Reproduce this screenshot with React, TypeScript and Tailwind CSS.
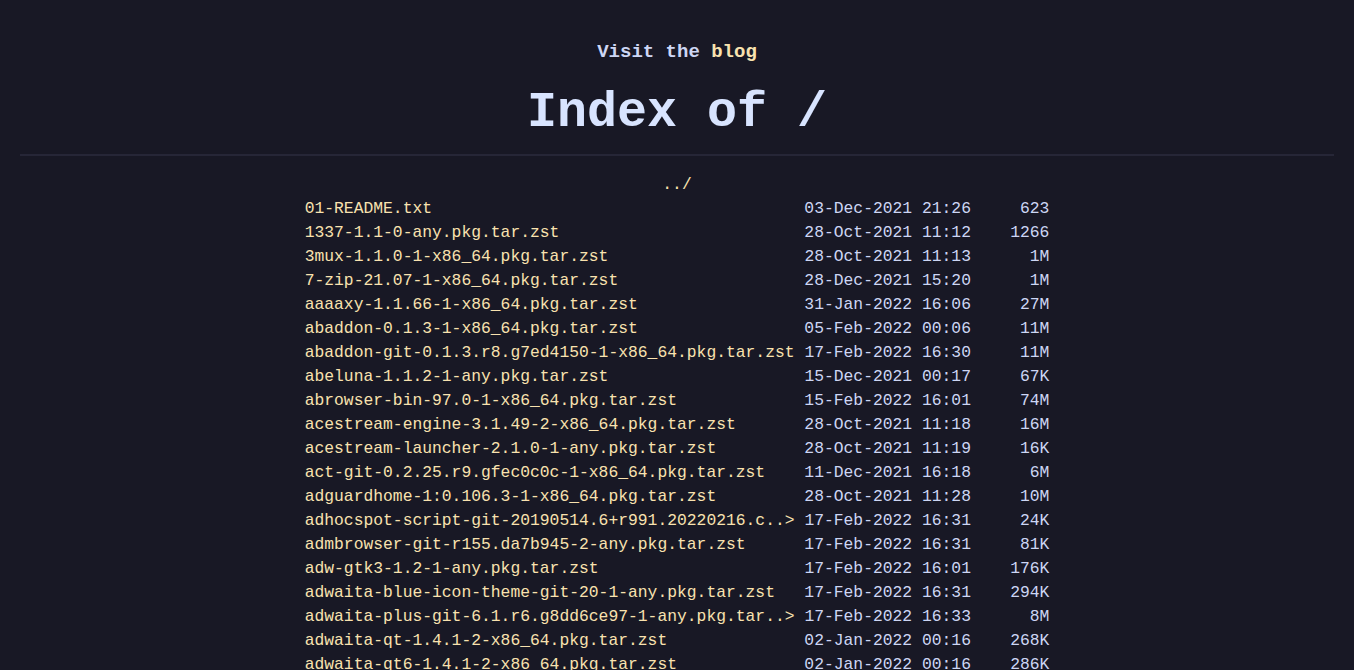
import React from "react";

const rows: [string, string, string][] = [
  ["01-README.txt", "03-Dec-2021 21:26", "623"],
  ["1337-1.1-0-any.pkg.tar.zst", "28-Oct-2021 11:12", "1266"],
  ["3mux-1.1.0-1-x86_64.pkg.tar.zst", "28-Oct-2021 11:13", "1M"],
  ["7-zip-21.07-1-x86_64.pkg.tar.zst", "28-Dec-2021 15:20", "1M"],
  ["aaaaxy-1.1.66-1-x86_64.pkg.tar.zst", "31-Jan-2022 16:06", "27M"],
  ["abaddon-0.1.3-1-x86_64.pkg.tar.zst", "05-Feb-2022 00:06", "11M"],
  ["abaddon-git-0.1.3.r8.g7ed4150-1-x86_64.pkg.tar.zst", "17-Feb-2022 16:30", "11M"],
  ["abeluna-1.1.2-1-any.pkg.tar.zst", "15-Dec-2021 00:17", "67K"],
  ["abrowser-bin-97.0-1-x86_64.pkg.tar.zst", "15-Feb-2022 16:01", "74M"],
  ["acestream-engine-3.1.49-2-x86_64.pkg.tar.zst", "28-Oct-2021 11:18", "16M"],
  ["acestream-launcher-2.1.0-1-any.pkg.tar.zst", "28-Oct-2021 11:19", "16K"],
  ["act-git-0.2.25.r9.gfec0c0c-1-x86_64.pkg.tar.zst", "11-Dec-2021 16:18", "6M"],
  ["adguardhome-1:0.106.3-1-x86_64.pkg.tar.zst", "28-Oct-2021 11:28", "10M"],
  ["adhocspot-script-git-20190514.6+r991.20220216.c..>", "17-Feb-2022 16:31", "24K"],
  ["admbrowser-git-r155.da7b945-2-any.pkg.tar.zst", "17-Feb-2022 16:31", "81K"],
  ["adw-gtk3-1.2-1-any.pkg.tar.zst", "17-Feb-2022 16:01", "176K"],
  ["adwaita-blue-icon-theme-git-20-1-any.pkg.tar.zst", "17-Feb-2022 16:31", "294K"],
  ["adwaita-plus-git-6.1.r6.g8dd6ce97-1-any.pkg.tar..>", "17-Feb-2022 16:33", "8M"],
  ["adwaita-qt-1.4.1-2-x86_64.pkg.tar.zst", "02-Jan-2022 00:16", "268K"],
  ["adwaita-qt6-1.4.1-2-x86_64.pkg.tar.zst", "02-Jan-2022 00:16", "286K"],
  ["adwaita-qt-git-1.4.1.r22.gd73ac03-1-x86_64.pkg.tar.zst", "17-Feb-2022 16:33", "268K"],
  ["aerc-0.7.1-1-x86_64.pkg.tar.zst", "28-Oct-2021 11:31", "4M"],
];

export default function App() {
  return (
    <div
      className="min-h-screen bg-[#181825] text-[#cdd6f4]"
      style={{ fontFamily: '"Liberation Mono", "DejaVu Sans Mono", monospace' }}
    >
      <div className="pt-[40px] text-center">
        <p className="text-[19px] leading-[24px] font-bold text-[#cdd6f4]">
          Visit the <a className="text-[#f9e2af]">blog</a>
        </p>
        <h1 className="mt-[19px] text-[50px] leading-[60px] font-bold text-[#d8e4ff]">Index of /</h1>
      </div>
      <div className="mx-[20px] mt-[11px] h-[2px] bg-[#262637]" />
      <div className="mt-[17px] text-center text-[16.33px] leading-[24px]">
        <a className="text-[#f9e2af]">../</a>
      </div>
      <pre
        className="mx-auto w-fit text-[16.33px] leading-[24px] pb-8"
        style={{ fontFamily: '"Liberation Mono", "DejaVu Sans Mono", monospace' }}
      >
        {rows.map(([name, date, size]) => {
          const n = name.length > 50 ? name.slice(0, 47) + "..>" : name;
          return (
            <div key={name}>
              <a className="text-[#f9e2af]">{n}</a>
              <span className="text-[#cdd6f4]">
                {" ".repeat(51 - n.length) + date + size.padStart(8, " ")}
              </span>
            </div>
          );
        })}
      </pre>
    </div>
  );
}
